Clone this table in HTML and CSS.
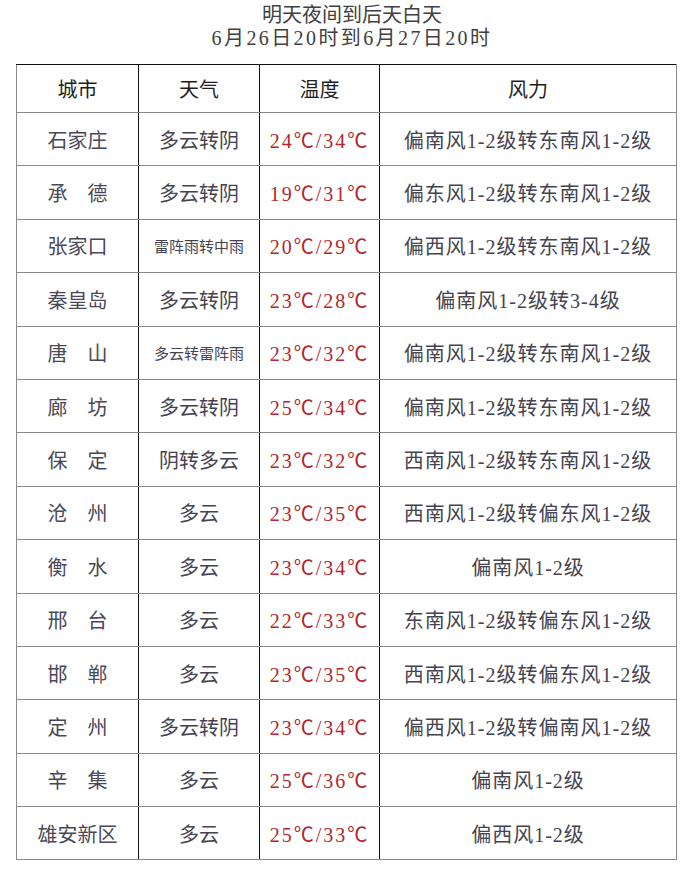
FILE: index.html
```html
<!DOCTYPE html>
<html lang="zh-CN">
<head>
<meta charset="utf-8">
<title>明天夜间到后天白天</title>
<link rel="stylesheet" href="styles.css">
</head>
<body>
<div class="page">
  <header class="title">
    <div class="title-line">明天夜间到后天白天</div>
    <div class="title-line sub">6月26日20时到6月27日20时</div>
  </header>
  <table class="forecast">
    <colgroup>
      <col class="c-city"><col class="c-weather"><col class="c-temp"><col class="c-wind">
    </colgroup>
    <thead>
      <tr class="head-row"><th>城市</th><th>天气</th><th>温度</th><th>风力</th></tr>
    </thead>
    <tbody>
      <tr><td class="city">石家庄</td><td>多云转阴</td><td class="temp">24℃/34℃</td><td class="wind">偏南风1-2级转东南风1-2级</td></tr>
      <tr><td class="city">承　德</td><td>多云转阴</td><td class="temp">19℃/31℃</td><td class="wind">偏东风1-2级转东南风1-2级</td></tr>
      <tr><td class="city">张家口</td><td class="small">雷阵雨转中雨</td><td class="temp">20℃/29℃</td><td class="wind">偏西风1-2级转东南风1-2级</td></tr>
      <tr class="dark"><td class="city">秦皇岛</td><td>多云转阴</td><td class="temp">23℃/28℃</td><td class="wind">偏南风1-2级转3-4级</td></tr>
      <tr><td class="city">唐　山</td><td class="small">多云转雷阵雨</td><td class="temp">23℃/32℃</td><td class="wind">偏南风1-2级转东南风1-2级</td></tr>
      <tr><td class="city">廊　坊</td><td>多云转阴</td><td class="temp">25℃/34℃</td><td class="wind">偏南风1-2级转东南风1-2级</td></tr>
      <tr class="dark"><td class="city">保　定</td><td>阴转多云</td><td class="temp">23℃/32℃</td><td class="wind">西南风1-2级转东南风1-2级</td></tr>
      <tr class="dark"><td class="city">沧　州</td><td>多云</td><td class="temp">23℃/35℃</td><td class="wind">西南风1-2级转偏东风1-2级</td></tr>
      <tr><td class="city">衡　水</td><td>多云</td><td class="temp">23℃/34℃</td><td class="wind">偏南风1-2级</td></tr>
      <tr><td class="city">邢　台</td><td>多云</td><td class="temp">22℃/33℃</td><td class="wind">东南风1-2级转偏东风1-2级</td></tr>
      <tr class="dark"><td class="city">邯　郸</td><td>多云</td><td class="temp">23℃/35℃</td><td class="wind">西南风1-2级转偏东风1-2级</td></tr>
      <tr><td class="city">定　州</td><td>多云转阴</td><td class="temp">23℃/34℃</td><td class="wind">偏西风1-2级转偏南风1-2级</td></tr>
      <tr class="dark"><td class="city">辛　集</td><td>多云</td><td class="temp">25℃/36℃</td><td class="wind">偏南风1-2级</td></tr>
      <tr><td class="city">雄安新区</td><td>多云</td><td class="temp">25℃/33℃</td><td class="wind">偏西风1-2级</td></tr>
    </tbody>
  </table>
</div>
</body>
</html>
```
FILE: styles.css
```css
html, body {
  margin: 0;
  padding: 0;
  background: #ffffff;
}
body {
  font-family: "Liberation Serif", "Noto Sans CJK SC", serif;
  color: #45434f;
}
.page {
  width: 690px;
  padding-top: 4px;
}
.title {
  text-align: center;
  padding-left: 14px;
  font-size: 20px;
  line-height: 23px;
  color: #404040;
}
.title .sub {
  letter-spacing: 2.4px;
}
.forecast {
  margin: 14px 0 0 16px;
  width: 660px;
  border-collapse: collapse;
  table-layout: fixed;
}
.c-city { width: 122px; }
.c-weather { width: 121px; }
.c-temp { width: 120px; }
.c-wind { width: 297px; }
.forecast th,
.forecast td {
  border-left: 1.5px solid #111;
  border-right: 1.5px solid #111;
  border-top: 1px solid #8a8a8a;
  border-bottom: 1px solid #8a8a8a;
  text-align: center;
  vertical-align: middle;
  padding: 0;
  font-size: 20px;
  font-weight: normal;
  white-space: nowrap;
}
.forecast tr > :first-child { border-left: 1.5px solid #8a8a8a; }
.forecast tr > :last-child { border-right: 1.5px solid #8a8a8a; }
.head-row th {
  height: 47px;
  border-top: 1.5px solid #111;
  color: #1e1e1e;
}
.forecast tbody tr { height: 53.4px; }
.forecast tbody tr.dark td { border-top-color: #222; }
.city { color: #4a4756; }
.small { font-size: 15px !important; }
.wind { letter-spacing: 1px; }
.temp {
  color: #b3262d;
  letter-spacing: 2px;
}
```
